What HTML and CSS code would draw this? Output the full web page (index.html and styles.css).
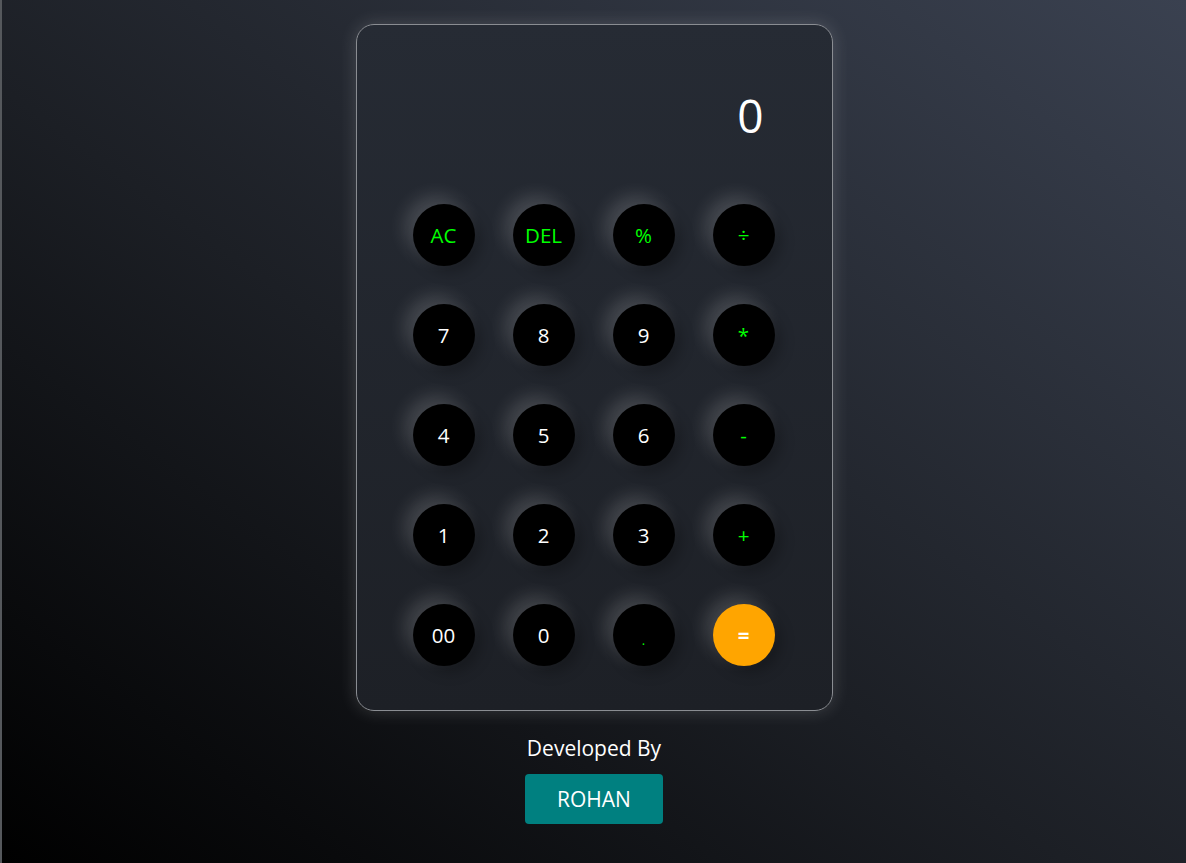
FILE: index.html
```html
<!DOCTYPE html>
<html lang="en">
<head>
<meta charset="utf-8">
<title>Calculator</title>
<link rel="stylesheet" href="styles.css">
</head>
<body>
<main class="page">
  <section class="calc">
    <div class="display">0</div>
    <div class="keys">
      <button class="key op">AC</button>
      <button class="key op">DEL</button>
      <button class="key op">%</button>
      <button class="key op">÷</button>
      <button class="key">7</button>
      <button class="key">8</button>
      <button class="key">9</button>
      <button class="key op">*</button>
      <button class="key">4</button>
      <button class="key">5</button>
      <button class="key">6</button>
      <button class="key op">-</button>
      <button class="key">1</button>
      <button class="key">2</button>
      <button class="key">3</button>
      <button class="key op">+</button>
      <button class="key">00</button>
      <button class="key">0</button>
      <button class="key op dot">.</button>
      <button class="key eq">=</button>
    </div>
  </section>
  <footer class="credit">
    <p class="credit-label">Developed By</p>
    <a class="credit-name">ROHAN</a>
  </footer>
</main>
</body>
</html>
```
FILE: styles.css
```css
html, body {
  margin: 0;
  height: 100%;
}
body {
  background: linear-gradient(to top right, #000000 0%, #1c1f25 45%, #3a4150 100%);
  font-family: "Open Sans", "Noto Sans", sans-serif;
  color: #fff;
  overflow: hidden;
  border-left: 2px solid #55585c;
  box-sizing: border-box;
}
.page {
  display: flex;
  flex-direction: column;
  align-items: center;
  padding-top: 24px;
}
.calc {
  width: 477px;
  height: 687px;
  box-sizing: border-box;
  border: 1px solid #8a8d92;
  border-radius: 18px;
  background: linear-gradient(to bottom, #262b34, #1d2026);
  box-shadow: 0 0 18px rgba(255, 255, 255, 0.16);
  padding: 0 56px;
  display: flex;
  flex-direction: column;
}
.display {
  height: 179px;
  box-sizing: border-box;
  padding-top: 67px;
  padding-right: 12px;
  text-align: right;
  font-size: 46px;
  line-height: 46px;
  color: #fff;
}
.keys {
  display: grid;
  grid-template-columns: repeat(4, 62px);
  grid-auto-rows: 62px;
  column-gap: 38px;
  row-gap: 38px;
}
.key {
  width: 62px;
  height: 62px;
  border-radius: 50%;
  border: none;
  background: #000;
  color: #fff;
  font-family: "Open Sans", "Noto Sans", sans-serif;
  font-size: 20.5px;
  font-weight: 500;
  padding: 0;
  box-shadow: -8px -8px 18px rgba(255, 255, 255, 0.16), 6px 6px 14px rgba(0, 0, 0, 0.25);
  display: flex;
  align-items: center;
  justify-content: center;
}
.key.op {
  color: #00ff00;
}
.key.dot {
  font-size: 13px;
  padding-top: 10px;
  box-sizing: border-box;
}
.key.eq {
  background: #ffa500;
  color: #fff;
  font-weight: 700;
}
.credit {
  display: flex;
  flex-direction: column;
  align-items: center;
  margin-top: 24px;
}
.credit-label {
  margin: 0;
  font-size: 21px;
  line-height: 26px;
  font-weight: 500;
}
.credit-name {
  margin-top: 13px;
  width: 138px;
  height: 50px;
  border-radius: 4px;
  background: #008080;
  color: #fff;
  font-size: 21px;
  font-weight: 500;
  display: flex;
  align-items: center;
  justify-content: center;
}
```
